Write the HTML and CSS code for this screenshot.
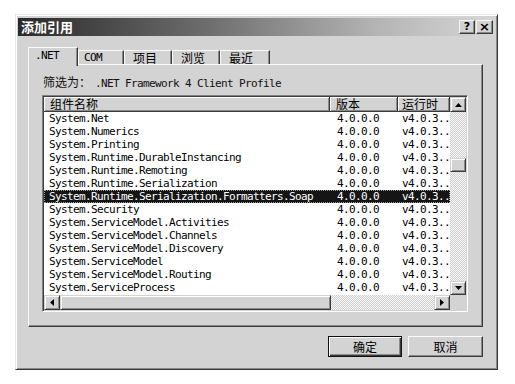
FILE: index.html
```html
<!DOCTYPE html>
<html>
<head>
<meta charset="utf-8">
<link rel="stylesheet" href="styles.css">
</head>
<body>
<div class="dialog">
  <div class="titlebar">
    <span class="title">添加引用</span>
    <div class="tbtns">
      <span class="tbtn">?</span>
      <span class="tbtn x">×</span>
    </div>
  </div>
  <div class="content">
    <div class="tabs">
      <div class="tab active mono w50">.NET</div>
      <div class="tab mono w46">COM</div>
      <div class="tab cjk w48">项目</div>
      <div class="tab cjk w48">浏览</div>
      <div class="tab cjk w50">最近</div>
    </div>
    <div class="panel">
      <div class="filter"><span class="cjk flabel">筛选为：</span><span class="mono">.NET Framework 4 Client Profile</span></div>
      <div class="list">
        <div class="main">
          <div class="header">
            <div class="hcell c1">组件名称</div>
            <div class="hcell c2">版本</div>
            <div class="hcell c3">运行时</div>
          </div>
          <div class="rows">
            <div class="row"><div class="cell c1">System.Net</div><div class="cell c2 v">4.0.0.0</div><div class="cell c3 r">v4.0.3..</div></div>
            <div class="row"><div class="cell c1">System.Numerics</div><div class="cell c2 v">4.0.0.0</div><div class="cell c3 r">v4.0.3..</div></div>
            <div class="row"><div class="cell c1">System.Printing</div><div class="cell c2 v">4.0.0.0</div><div class="cell c3 r">v4.0.3..</div></div>
            <div class="row"><div class="cell c1">System.Runtime.DurableInstancing</div><div class="cell c2 v">4.0.0.0</div><div class="cell c3 r">v4.0.3..</div></div>
            <div class="row"><div class="cell c1">System.Runtime.Remoting</div><div class="cell c2 v">4.0.0.0</div><div class="cell c3 r">v4.0.3..</div></div>
            <div class="row"><div class="cell c1">System.Runtime.Serialization</div><div class="cell c2 v">4.0.0.0</div><div class="cell c3 r">v4.0.3..</div></div>
            <div class="row sel"><div class="cell c1">System.Runtime.Serialization.Formatters.Soap</div><div class="cell c2 v">4.0.0.0</div><div class="cell c3 r">v4.0.3..</div></div>
            <div class="row"><div class="cell c1">System.Security</div><div class="cell c2 v">4.0.0.0</div><div class="cell c3 r">v4.0.3..</div></div>
            <div class="row"><div class="cell c1">System.ServiceModel.Activities</div><div class="cell c2 v">4.0.0.0</div><div class="cell c3 r">v4.0.3..</div></div>
            <div class="row"><div class="cell c1">System.ServiceModel.Channels</div><div class="cell c2 v">4.0.0.0</div><div class="cell c3 r">v4.0.3..</div></div>
            <div class="row"><div class="cell c1">System.ServiceModel.Discovery</div><div class="cell c2 v">4.0.0.0</div><div class="cell c3 r">v4.0.3..</div></div>
            <div class="row"><div class="cell c1">System.ServiceModel</div><div class="cell c2 v">4.0.0.0</div><div class="cell c3 r">v4.0.3..</div></div>
            <div class="row"><div class="cell c1">System.ServiceModel.Routing</div><div class="cell c2 v">4.0.0.0</div><div class="cell c3 r">v4.0.3..</div></div>
            <div class="row"><div class="cell c1">System.ServiceProcess</div><div class="cell c2 v">4.0.0.0</div><div class="cell c3 r">v4.0.3..</div></div>
          </div>
        </div>
        <div class="vscroll">
          <div class="sbtn up"><svg width="7" height="4" viewBox="0 0 7 4"><polygon points="3.5,0 7,4 0,4" fill="#000"/></svg></div>
          <div class="vtrack"><div class="vthumb"></div></div>
          <div class="sbtn down"><svg width="7" height="4" viewBox="0 0 7 4"><polygon points="0,0 7,0 3.5,4" fill="#000"/></svg></div>
        </div>
        <div class="hscroll">
          <div class="sbtn left"><svg width="4" height="7" viewBox="0 0 4 7"><polygon points="4,0 4,7 0,3.5" fill="#000"/></svg></div>
          <div class="hthumb"></div>
          <div class="htrack"></div>
          <div class="sbtn right"><svg width="4" height="7" viewBox="0 0 4 7"><polygon points="0,0 4,3.5 0,7" fill="#000"/></svg></div>
        </div>
        <div class="corner"></div>
      </div>
    </div>
    <div class="buttons">
      <div class="btn default"><span class="btn-in">确定</span></div>
      <div class="btn"><span class="btn-in">取消</span></div>
    </div>
  </div>
</div>
</body>
</html>
```

FILE: styles.css
```css
* { box-sizing: border-box; }
html, body { margin: 0; padding: 0; background: #fff; }
body { padding: 14px 0 0 15px; font-family: "Noto Sans CJK SC", sans-serif; color: #000; }

.mono { font-family: "DejaVu Sans Mono", monospace; font-size: 11px; letter-spacing: -0.62px; }
.cjk { font-family: "Noto Sans CJK SC", sans-serif; font-size: 12px; }

.dialog {
  width: 483px; height: 356px;
  background: #d3d3d3;
  border: 1px solid; border-color: #e8e8e8 #3a3a3a #3a3a3a #e8e8e8;
  box-shadow: inset 1px 1px #fff, inset -1px -1px #8a8a8a;
  padding: 3px 2px;
}
.titlebar {
  height: 18px; display: flex; align-items: center; justify-content: space-between;
  padding: 0 2px 0 3px;
  background: linear-gradient(to right, #2a2a2a 0%, #6e6e6e 40%, #b4b4b4 75%, #d6d6d6 100%);
}
.title { color: #fff; font-weight: bold; font-size: 13px; line-height: 18px; }
.tbtns { display: flex; gap: 1px; }
.tbtn {
  width: 16px; height: 14px; background: #d3d3d3;
  border: 1px solid; border-color: #f4f4f4 #3a3a3a #3a3a3a #f4f4f4;
  box-shadow: inset -1px -1px #8a8a8a;
  font-family: "DejaVu Sans", sans-serif; font-weight: bold; font-size: 11px; line-height: 12px; text-align: center;
}
.tbtn.x { width: 17px; font-size: 13px; line-height: 11px; }

.content { padding: 11px 12px 0 10px; }
.tabs { display: flex; align-items: flex-end; height: 17px; }
.tab {
  height: 14px; background: #d3d3d3;
  border-top: 1px solid #fafafa; border-left: 1px solid #fafafa; border-right: 1px solid #3a3a3a;
  box-shadow: inset -1px 0 #8a8a8a;
  padding-left: 5px; line-height: 13px; white-space: nowrap;
}
.tab.active { height: 19px; margin-bottom: -2px; position: relative; z-index: 1; padding-left: 6px; line-height: 15px; }
.w50 { width: 50px; } .w46 { width: 46px; } .w48 { width: 48px; }
.tab.cjk { padding-left: 8px; }

.panel {
  height: 263px;
  border: 1px solid; border-color: #fafafa #3a3a3a #3a3a3a #fafafa;
  box-shadow: inset -1px -1px #8a8a8a;
  padding-left: 13px;
}
.filter { height: 30px; line-height: 30px; padding-left: 1px; color: #111; white-space: nowrap; }
.flabel { display: inline-block; width: 52px; }

.list {
  width: 426px; height: 217px;
  border: 1px solid; border-color: #808080 #fff #fff #808080;
  box-shadow: inset 1px 1px #404040, inset -1px -1px #d3d3d3;
  padding: 1px;
  background: #fff;
  display: grid; grid-template-columns: 406px 16px; grid-template-rows: 198px 15px;
}
.main { display: flex; flex-direction: column; background: #fff; min-height: 0; }
.header { display: flex; height: 15px; flex: none; }
.hcell {
  height: 15px; background: #d3d3d3; flex: none;
  border-right: 1px solid #3a3a3a; border-bottom: 1px solid #3a3a3a;
  box-shadow: inset 1px 1px #fff, inset -1px -1px #8a8a8a;
  font-size: 12px; line-height: 14px; white-space: nowrap;
  padding-left: 6px;
}
.hcell.c3 { padding-left: 4px; }
.c1 { width: 286px; } .c2 { width: 68px; } .c3 { width: 52px; }
.rows { flex: 1; min-height: 0; overflow: hidden; }
.row { display: flex; height: 13px; line-height: 13px; }
.cell {
  font-family: "DejaVu Sans Mono", monospace; font-size: 11px; letter-spacing: -0.62px;
  white-space: nowrap; overflow: hidden; flex: none;
}
.cell.c1 { padding-left: 5px; }
.cell.v { padding-left: 7px; }
.cell.r { padding-left: 4px; overflow: visible; }
.row.sel { background: #151515; color: #fff; outline: 1px dotted #9a9a9a; outline-offset: -1px; }

.vscroll { display: flex; flex-direction: column; }
.sbtn {
  background: #d3d3d3; flex: none;
  border: 1px solid; border-color: #d3d3d3 #3a3a3a #3a3a3a #d3d3d3;
  box-shadow: inset 1px 1px #fff, inset -1px -1px #8a8a8a;
  display: flex; align-items: center; justify-content: center;
}
.sbtn.up { height: 15px; }
.sbtn.down { height: 14px; }
.sbtn.left, .sbtn.right { width: 16px; height: 15px; }
.vtrack, .htrack {
  flex: 1;
  background: repeating-conic-gradient(#d0d0d0 0 25%, #f6f6f6 0 50%) 0 0 / 2px 2px;
}
.vtrack { padding-top: 46px; }
.vthumb {
  height: 14px; background: #d3d3d3;
  border: 1px solid; border-color: #d3d3d3 #3a3a3a #3a3a3a #d3d3d3;
  box-shadow: inset 1px 1px #fff, inset -1px -1px #8a8a8a;
}
.hscroll { display: flex; }
.hthumb {
  width: 271px; flex: none; background: #d3d3d3;
  border: 1px solid; border-color: #d3d3d3 #3a3a3a #3a3a3a #d3d3d3;
  box-shadow: inset 1px 1px #fff, inset -1px -1px #8a8a8a;
}
.corner { background: #d3d3d3; }

.buttons { display: flex; justify-content: flex-end; gap: 6px; margin-top: 9px; }
.btn {
  width: 75px; height: 21px; background: #d3d3d3;
  border: 1px solid; border-color: #fafafa #3a3a3a #3a3a3a #fafafa;
  box-shadow: inset -1px -1px #8a8a8a;
  display: flex; align-items: center; justify-content: center;
  font-size: 12px;
}
.btn.default { width: 74px; border: 1px solid #111; box-shadow: inset 1px 1px #fafafa, inset -1px -1px #3a3a3a, inset -2px -2px #8a8a8a; }
.btn-in { line-height: 14px; }
```
